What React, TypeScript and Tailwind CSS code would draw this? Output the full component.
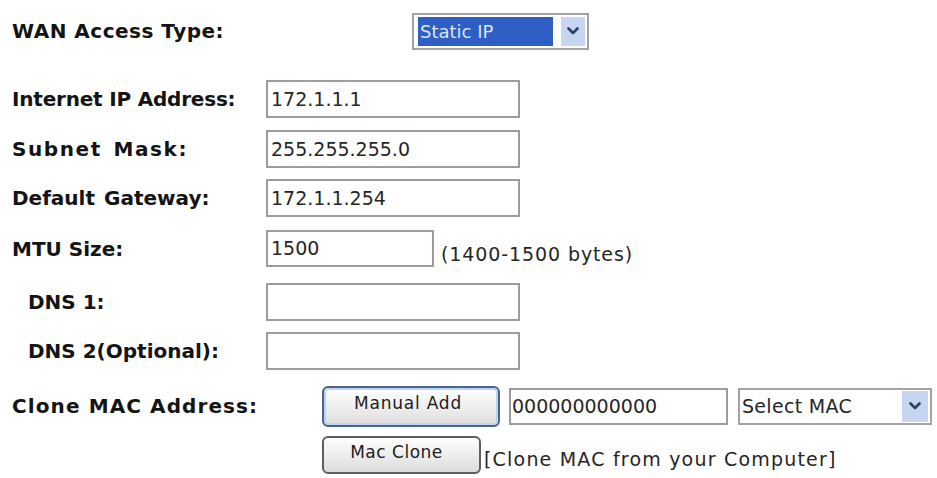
const Chevron = () => (
  <svg width="12" height="8" viewBox="0 0 12 8" fill="none">
    <path d="M1.5 1.5 L6 6 L10.5 1.5" stroke="#2c3f69" strokeWidth="2.6" strokeLinecap="round" strokeLinejoin="round" />
  </svg>
);

type FieldRowProps = {
  label: string;
  value?: string;
  indent?: boolean;
  labelClass?: string;
  className?: string;
};

const FieldRow = ({ label, value = "", indent = false, labelClass = "", className = "" }: FieldRowProps) => (
  <div className={`flex items-center h-[38px] ${className}`}>
    <span className={`w-[254px] shrink-0 font-bold text-[20px] ${indent ? "pl-[16px]" : ""} ${labelClass}`}>{label}</span>
    <div className="w-[254px] h-[38px] border-2 border-[#9c9c9c] bg-white flex items-center pl-[3px] text-[19px] text-[#262626]">
      {value}
    </div>
  </div>
);

const App = () => {
  return (
    <div className="w-[937px] h-[478px] bg-white overflow-hidden font-['DejaVu_Sans','Liberation_Sans',sans-serif] text-[#141414] pl-[12px] pt-[13px]">
      {/* WAN type */}
      <div className="flex items-center h-[36px]">
        <span className="w-[400px] shrink-0 font-bold text-[20px] tracking-[0.5px]">WAN Access Type:</span>
        <div className="w-[177px] h-[37px] border-2 border-[#a3a3a3] flex items-stretch py-[2px] pl-[4px] pr-[2px] gap-[8px]">
          <div className="flex-1 bg-[#2f5ec4] text-[#d9e6ff] text-[18px] flex items-center pl-[2px]">Static IP</div>
          <div className="w-[24px] bg-[#c8d5f1] flex items-center justify-center">
            <Chevron />
          </div>
        </div>
      </div>

      <FieldRow label="Internet IP Address:" value="172.1.1.1" labelClass="tracking-[-0.2px]" className="mt-[31px]" />
      <FieldRow label="Subnet Mask:" value="255.255.255.0" labelClass="tracking-[1.6px] [word-spacing:3px]" className="mt-[12px]" />
      <FieldRow label="Default Gateway:" value="172.1.1.254" labelClass="[word-spacing:2px]" className="mt-[11px]" />

      <div className="flex items-center h-[37px] mt-[13px]">
        <span className="w-[254px] shrink-0 font-bold text-[20px]">MTU Size:</span>
        <div className="w-[168px] h-[37px] border-2 border-[#9c9c9c] flex items-center pl-[3px] text-[19px] text-[#262626]">1500</div>
        <span className="ml-[7px] mt-[12px] text-[19px] tracking-[0.9px] text-[#262626]">(1400-1500 bytes)</span>
      </div>

      <FieldRow label="DNS 1:" indent className="mt-[16px]" />
      <FieldRow label="DNS 2(Optional):" indent className="mt-[11px]" />

      {/* Clone MAC */}
      <div className="flex items-center h-[42px] mt-[15px]">
        <span className="w-[310px] shrink-0 font-bold text-[20px] tracking-[1.1px]">Clone MAC Address:</span>
        <button className="w-[178px] h-[41px] rounded-[6px] border-2 border-[#4b6487] bg-gradient-to-b from-white to-[#dedede] shadow-[inset_0_0_0_2px_#bcd3f3] text-[17px] tracking-[0.8px] text-[#202020] pb-[5px] pr-[6px]">
          Manual Add
        </button>
        <div className="ml-[9px] w-[219px] h-[37px] border-2 border-[#9c9c9c] flex items-center pl-[1px] text-[19px] text-[#262626]">
          000000000000
        </div>
        <div className="ml-[10px] w-[194px] h-[37px] border-2 border-[#a3a3a3] flex items-stretch py-[1px] pr-[2px]">
          <div className="flex-1 flex items-center pl-[2px] text-[19px] tracking-[0.3px] text-[#262626]">Select MAC</div>
          <div className="w-[26px] bg-[#c8d5f1] flex items-center justify-center">
            <Chevron />
          </div>
        </div>
      </div>

      <div className="flex items-center h-[38px] mt-[9px]">
        <div className="w-[310px] shrink-0" />
        <button className="w-[159px] h-[38px] rounded-[6px] border-2 border-[#5f5f5f] bg-gradient-to-b from-white to-[#dcdcdc] text-[17px] tracking-[0.5px] text-[#202020] pb-[5px] pr-[10px]">
          Mac Clone
        </button>
        <span className="ml-[3px] mt-[8px] text-[19px] tracking-[1.2px] text-[#262626]">[Clone MAC from your Computer]</span>
      </div>
    </div>
  );
};

export default App;
